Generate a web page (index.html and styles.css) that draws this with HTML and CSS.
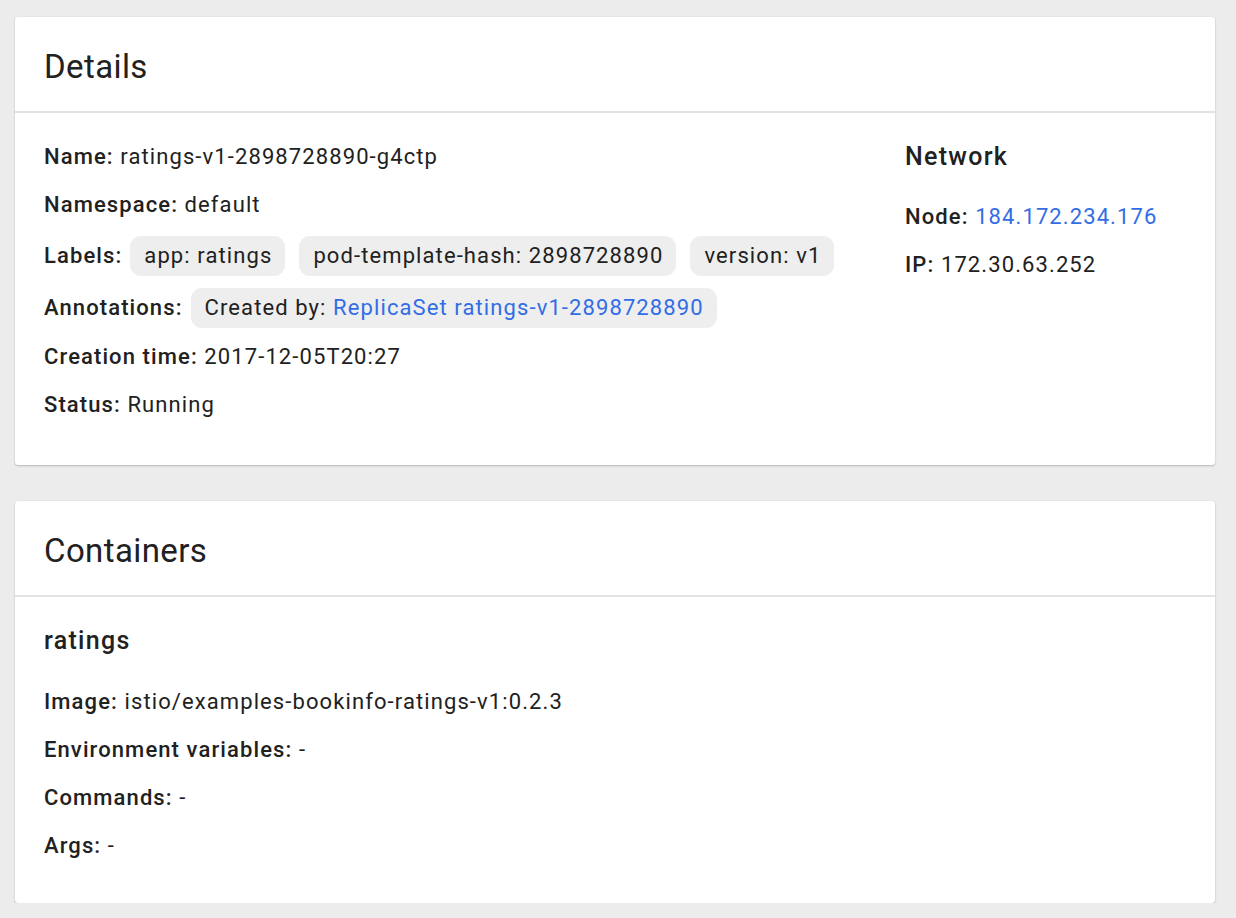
FILE: index.html
```html
<!DOCTYPE html>
<html>
<head>
<meta charset="utf-8">
<link rel="stylesheet" href="styles.css">
</head>
<body>
<div class="page">
  <section class="card">
    <header class="card-header">Details</header>
    <div class="card-body details-body">
      <div class="main-col">
        <div class="row"><span class="key">Name:</span> ratings-v1-2898728890-g4ctp</div>
        <div class="row"><span class="key">Namespace:</span> default</div>
        <div class="chip-row"><span class="key">Labels:</span>
          <span class="chips">
            <span class="chip">app: ratings</span>
            <span class="chip">pod-template-hash: 2898728890</span>
            <span class="chip">version: v1</span>
          </span>
        </div>
        <div class="chip-row"><span class="key">Annotations:</span>
          <span class="chips">
            <span class="chip">Created by: <a class="link">ReplicaSet ratings-v1-2898728890</a></span>
          </span>
        </div>
        <div class="row"><span class="key">Creation time:</span> 2017-12-05T20:27</div>
        <div class="row"><span class="key">Status:</span> Running</div>
      </div>
      <div class="side-col">
        <div class="side-title">Network</div>
        <div class="row"><span class="key">Node:</span> <a class="link">184.172.234.176</a></div>
        <div class="row"><span class="key">IP:</span> 172.30.63.252</div>
      </div>
    </div>
  </section>
  <section class="card">
    <header class="card-header">Containers</header>
    <div class="card-body containers-body">
      <div class="container-title">ratings</div>
      <div class="row"><span class="key">Image:</span> istio/examples-bookinfo-ratings-v1:0.2.3</div>
      <div class="row"><span class="key">Environment variables:</span> -</div>
      <div class="row"><span class="key">Commands:</span> -</div>
      <div class="row"><span class="key">Args:</span> -</div>
    </div>
  </section>
</div>
</body>
</html>
```
FILE: styles.css
```css
html, body {
  margin: 0;
  padding: 0;
  background: #ececec;
}
body {
  font-family: Roboto, "Noto Sans", sans-serif;
  color: #212121;
}
.page {
  padding: 17px 21px 0 15px;
  display: flex;
  flex-direction: column;
  gap: 36px;
}
.card {
  background: #fff;
  border-radius: 3px;
  box-shadow: 0 1px 2px rgba(0,0,0,0.22), 0 0 1px rgba(0,0,0,0.12);
}
.card-header {
  height: 96px;
  box-sizing: border-box;
  padding: 4px 29px 0;
  display: flex;
  align-items: center;
  font-size: 33px;
  font-weight: 400;
  letter-spacing: 0.4px;
  border-bottom: 2px solid #e3e3e3;
}
.card-body {
  padding: 20px 29px 36px;
}
.details-body {
  display: flex;
}
.main-col {
  flex: 1;
}
.side-col {
  width: 281px;
}
.row {
  height: 48px;
  line-height: 48px;
  font-size: 22px;
  letter-spacing: 1.1px;
  white-space: nowrap;
}
.key {
  font-weight: 500;
}
.chip-row {
  height: 52px;
  box-sizing: border-box;
  padding-top: 7px;
  display: flex;
  align-items: baseline;
  font-size: 22px;
  letter-spacing: 1.1px;
  white-space: nowrap;
}
.chips {
  display: flex;
  gap: 14px;
  margin-left: 8px;
  align-items: baseline;
}
.chip {
  background: #eeeeee;
  border-radius: 11px;
  padding: 8px 13px 8px 14px;
  line-height: 24px;
}
.link {
  color: #326de6;
  text-decoration: none;
}
.side-title {
  height: 48px;
  line-height: 48px;
  font-size: 25px;
  font-weight: 500;
  letter-spacing: 1.3px;
  margin-bottom: 12px;
}
.containers-body {
  padding-top: 20px;
  padding-bottom: 33px;
}
.container-title {
  height: 48px;
  line-height: 48px;
  font-size: 25px;
  font-weight: 500;
  letter-spacing: 1.3px;
  margin-bottom: 13px;
}
```
